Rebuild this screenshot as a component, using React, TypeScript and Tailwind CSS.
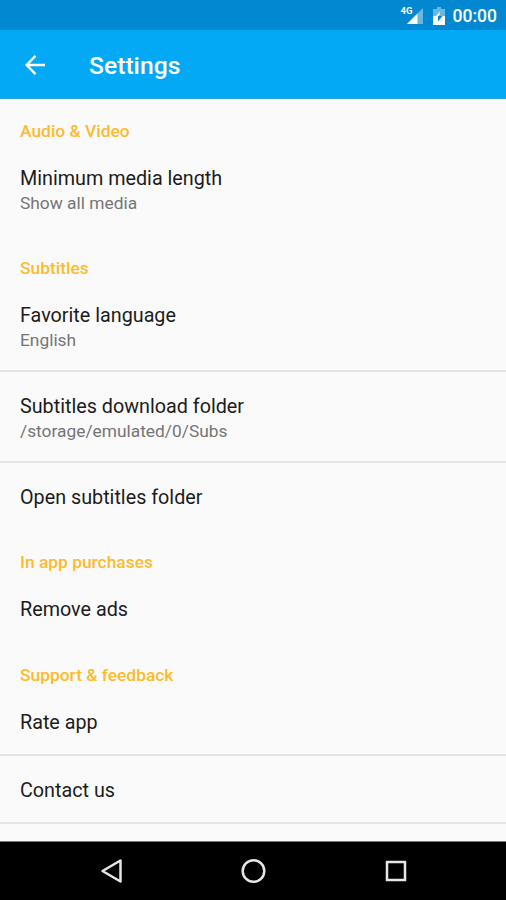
import React from "react";

type Item = { title: string; summary?: string };

const SECTIONS: { name: string; items: Item[] }[] = [
  { name: "Audio & Video", items: [{ title: "Minimum media length", summary: "Show all media" }] },
  {
    name: "Subtitles",
    items: [
      { title: "Favorite language", summary: "English" },
      { title: "Subtitles download folder", summary: "/storage/emulated/0/Subs" },
      { title: "Open subtitles folder" },
    ],
  },
  { name: "In app purchases", items: [{ title: "Remove ads" }] },
  { name: "Support & feedback", items: [{ title: "Rate app" }, { title: "Contact us" }] },
];

function StatusBar() {
  return (
    <div className="h-[30px] shrink-0 bg-[#0288d1] flex items-center justify-end pr-[9px] text-white">
      <svg width="24" height="20" viewBox="0 0 24 20" className="mr-[9px]">
        <path d="M23 3v16H7z" fill="#67b8e3" />
        <path d="M17.5 8.5V19H7z" fill="#fff" />
        <text x="0.5" y="9" fontSize="9.5" fontWeight="700" fill="#fff" fontFamily="Roboto">4G</text>
      </svg>
      {/* half-charged battery with the charging bolt */}
      <svg width="12" height="18" viewBox="0 0 12 18" className="mr-[8px] mt-[1px]">
        <path d="M4 0h4v2h4v7H0V2h4z" fill="#67b8e3" />
        <path d="M0 9h12v9H0z" fill="#fff" />
        <path d="M7 4.5 3 9h3z" fill="#fff" />
        <path d="M5 14.5 9.5 9H5z" fill="#0288d1" />
      </svg>
      <span className="text-[17.5px] leading-[20px] font-medium mt-[2px]">00:00</span>
    </div>
  );
}

function Toolbar() {
  return (
    <div className="h-[69px] shrink-0 bg-[#03a9f4] flex items-center pl-[25px] border-b border-[#2b9fd8]">
      <svg width="20" height="20" viewBox="0 0 20 20" fill="none" stroke="#fff" strokeWidth="2.3" className="mt-[1px]">
        <path d="M10.5 .9 1.6 10l8.9 9.1M1.6 10H20" />
      </svg>
      <h1 className="ml-[44px] mt-[4px] text-[24.7px] font-medium text-white">Settings</h1>
    </div>
  );
}

function Row({ item, divider }: { item: Item; divider: boolean }) {
  return (
    <div className={divider ? "border-b-2 border-[#e5e5e5]" : "border-b-2 border-transparent"}>
      <div className={item.summary ? "h-[89px] pt-[22px] pl-5" : "h-[65.6px] pt-[22px] pl-5"}>
        <div className="text-[19.75px] leading-[26px] text-[#1c1c1c]">{item.title}</div>
        {item.summary && (
          <div className="text-[17.35px] leading-[23px] text-[#757575]">{item.summary}</div>
        )}
      </div>
    </div>
  );
}

export default function App() {
  return (
    <div className="w-[506px] h-[900px] flex flex-col overflow-hidden bg-[#fafafa] font-[Roboto,sans-serif]">
      <StatusBar />
      <Toolbar />
      <div className="flex-1 min-h-0 overflow-hidden">
        {SECTIONS.map((section, idx) => (
          <div key={section.name}>
            <h2 className="h-[45.3px] pt-[20.3px] pl-5 text-[17.4px] leading-[24px] font-medium text-[#fdbb2d]">
              {section.name}
            </h2>
            {section.items.map((item, i) => (
              <Row
                key={item.title}
                item={item}
                divider={i < section.items.length - 1 || idx === SECTIONS.length - 1}
              />
            ))}
          </div>
        ))}
      </div>
      <div className="h-[59px] shrink-0 bg-black border-t border-[#777] flex items-center">
        <svg width="506" height="58" viewBox="0 0 506 58" fill="none" stroke="#e6e6e6" strokeWidth="2.5">
          <path d="M120.5 18.5v21L102.5 29z" strokeLinejoin="round" />
          <circle cx="253.5" cy="29" r="10.8" />
          <rect x="387" y="20" width="18" height="18" />
        </svg>
      </div>
    </div>
  );
}
